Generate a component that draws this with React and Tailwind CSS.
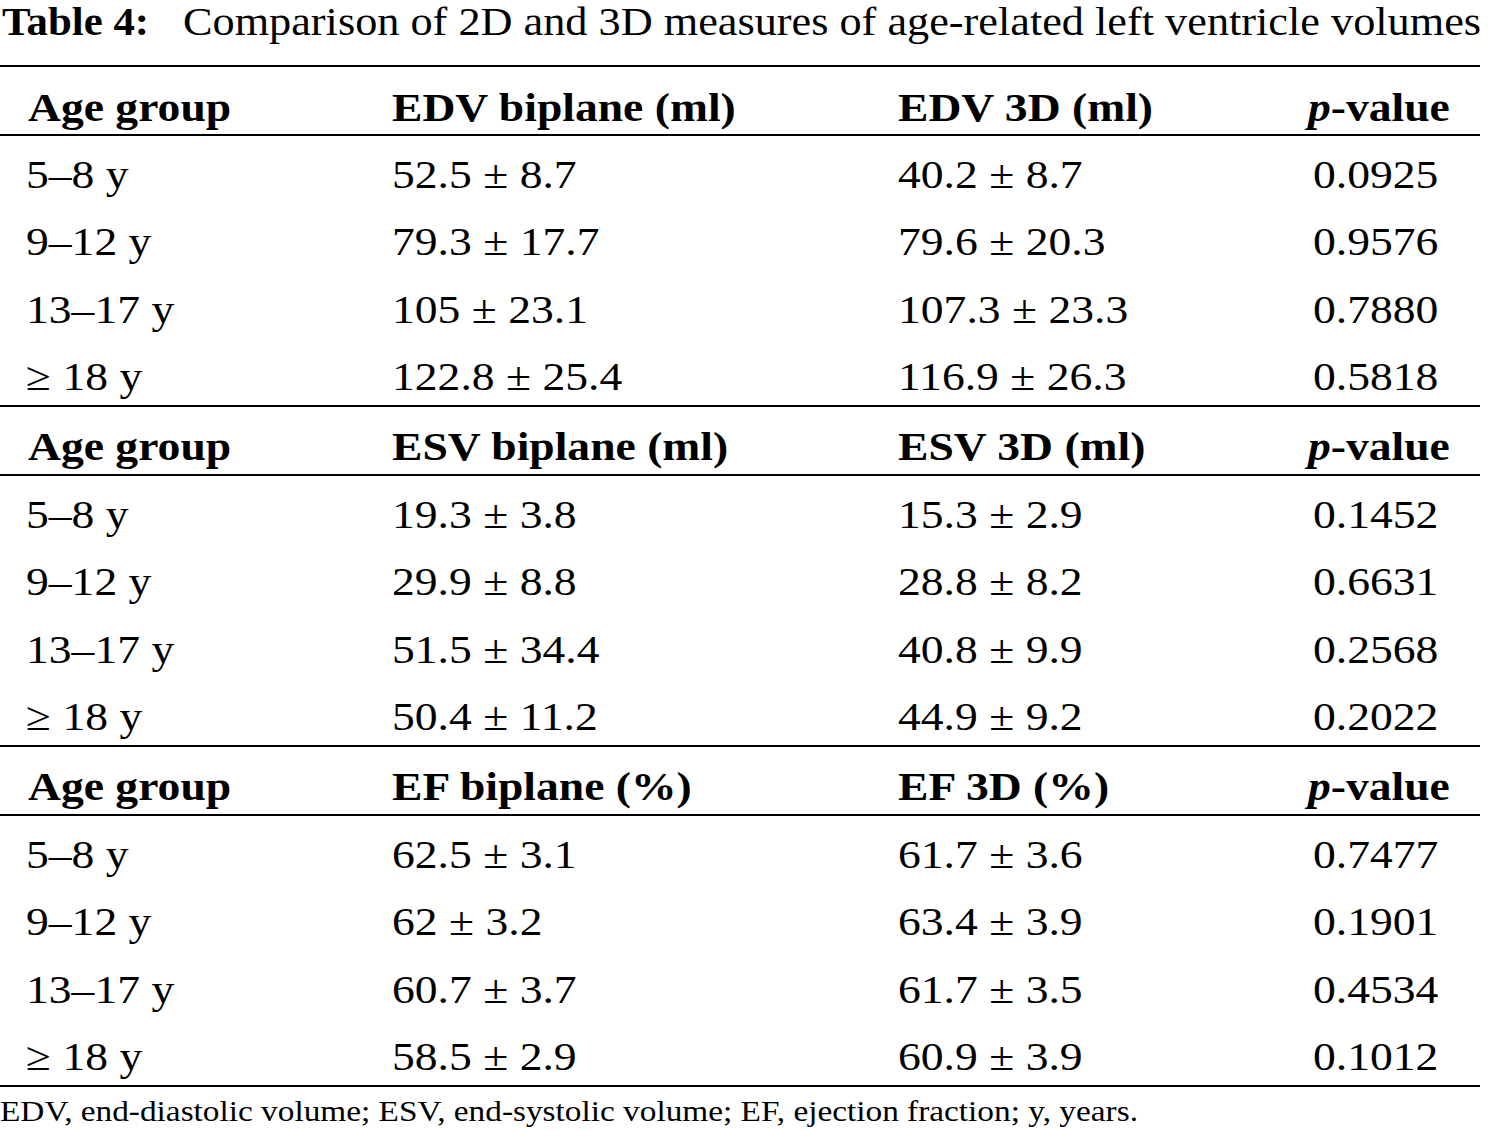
import React from "react";

const sections = [
  {
    head: ["EDV biplane (ml)", "EDV 3D (ml)"],
    rows: [
      ["5–8 y", "52.5 ± 8.7", "40.2 ± 8.7", "0.0925"],
      ["9–12 y", "79.3 ± 17.7", "79.6 ± 20.3", "0.9576"],
      ["13–17 y", "105 ± 23.1", "107.3 ± 23.3", "0.7880"],
      ["≥ 18 y", "122.8 ± 25.4", "116.9 ± 26.3", "0.5818"],
    ],
  },
  {
    head: ["ESV biplane (ml)", "ESV 3D (ml)"],
    rows: [
      ["5–8 y", "19.3 ± 3.8", "15.3 ± 2.9", "0.1452"],
      ["9–12 y", "29.9 ± 8.8", "28.8 ± 8.2", "0.6631"],
      ["13–17 y", "51.5 ± 34.4", "40.8 ± 9.9", "0.2568"],
      ["≥ 18 y", "50.4 ± 11.2", "44.9 ± 9.2", "0.2022"],
    ],
  },
  {
    head: ["EF biplane (%)", "EF 3D (%)"],
    rows: [
      ["5–8 y", "62.5 ± 3.1", "61.7 ± 3.6", "0.7477"],
      ["9–12 y", "62 ± 3.2", "63.4 ± 3.9", "0.1901"],
      ["13–17 y", "60.7 ± 3.7", "61.7 ± 3.5", "0.4534"],
      ["≥ 18 y", "58.5 ± 2.9", "60.9 ± 3.9", "0.1012"],
    ],
  },
];

function T({ children, bold }) {
  return (
    <span
      className={
        "inline-block whitespace-nowrap origin-left scale-x-[1.14] " +
        (bold ? "font-bold" : "")
      }
    >
      {children}
    </span>
  );
}

function HeaderRow({ head, first }) {
  return (
    <div
      className={
        "grid grid-cols-[392px_506px_410px_1fr] h-[67px] text-[40px] leading-[40px] " +
        (first ? "pt-[21px]" : "pt-[20px]")
      }
    >
      <div className="pl-[28px]">
        <T bold>Age group</T>
      </div>
      <div>
        <T bold>{head[0]}</T>
      </div>
      <div>
        <T bold>{head[1]}</T>
      </div>
      <div>
        <T bold>
          <i>p</i>-value
        </T>
      </div>
    </div>
  );
}

function DataRow({ row }) {
  return (
    <div className="grid grid-cols-[392px_506px_415px_1fr] h-[67.25px] pt-[19px] text-[40px] leading-[40px]">
      <div className="pl-[26px]">
        <T>{row[0]}</T>
      </div>
      <div>
        <T>{row[1]}</T>
      </div>
      <div>
        <T>{row[2]}</T>
      </div>
      <div>
        <T>{row[3]}</T>
      </div>
    </div>
  );
}

export default function App() {
  return (
    <div className="w-[1498px] h-[1130px] bg-white text-black font-['Liberation_Serif','Times_New_Roman',serif] overflow-hidden">
      <div className="flex h-[65px] text-[40px] leading-[44px] whitespace-nowrap">
        <span className="w-[183px] pl-[2px] shrink-0">
          <span className="inline-block origin-left scale-x-[1.07] font-bold">Table 4:</span>
        </span>
        <span className="inline-block origin-left scale-x-[1.135] text-[39px]">
          Comparison of 2D and 3D measures of age-related left ventricle volumes
        </span>
      </div>
      <div className="w-[1480px]">
        <div className="h-[2px] bg-black" />
        {sections.map((s, i) => (
          <div key={i}>
            <HeaderRow head={s.head} first={i === 0} />
            <div className="h-[2px] bg-black" />
            {s.rows.map((r, j) => (
              <DataRow key={j} row={r} />
            ))}
            <div className="h-[2px] bg-black" />
          </div>
        ))}
      </div>
      <div className="mt-[9px] text-[30px] leading-[30px] whitespace-nowrap">
        <span className="inline-block origin-left scale-x-[1.11]">
          EDV, end-diastolic volume; ESV, end-systolic volume; EF, ejection fraction; y, years.
        </span>
      </div>
    </div>
  );
}
